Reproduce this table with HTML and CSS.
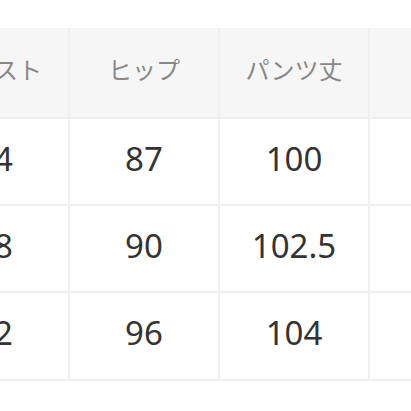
FILE: index.html
```html
<!DOCTYPE html>
<html lang="ja">
<head>
<meta charset="utf-8">
<link rel="stylesheet" href="styles.css">
</head>
<body>
<div class="viewport">
  <div class="table">
    <div class="cell head">ウエスト</div>
    <div class="cell head">ヒップ</div>
    <div class="cell head">パンツ丈</div>
    <div class="cell head">股下</div>
    <div class="cell">64</div>
    <div class="cell">87</div>
    <div class="cell">100</div>
    <div class="cell">72</div>
    <div class="cell">68</div>
    <div class="cell">90</div>
    <div class="cell">102.5</div>
    <div class="cell">74</div>
    <div class="cell">72</div>
    <div class="cell">96</div>
    <div class="cell">104</div>
    <div class="cell">75</div>
  </div>
</div>
</body>
</html>
```
FILE: styles.css
```css
html, body {
  margin: 0;
  padding: 0;
  background: #ffffff;
}
.viewport {
  width: 411px;
  height: 411px;
  overflow: hidden;
  padding-top: 28px;
  box-sizing: border-box;
}
.table {
  display: grid;
  grid-template-columns: repeat(4, 148px);
  grid-template-rows: 89px 85px 85px 86px;
  gap: 2px;
  margin-left: -80px;
  width: max-content;
  background: #f0f0f0;
  border-bottom: 2px solid #f0f0f0;
}
.cell {
  background: #ffffff;
  display: flex;
  align-items: center;
  justify-content: center;
  color: #333333;
  font-family: "Noto Sans", "Noto Sans CJK JP", sans-serif;
  font-weight: 400;
  font-size: 33px;
  padding-bottom: 7px;
  box-sizing: border-box;
}
.cell.head {
  background: #f6f6f6;
  color: #888888;
  font-family: "Noto Sans CJK JP", sans-serif;
  font-size: 24px;
  padding-bottom: 8px;
}
```
